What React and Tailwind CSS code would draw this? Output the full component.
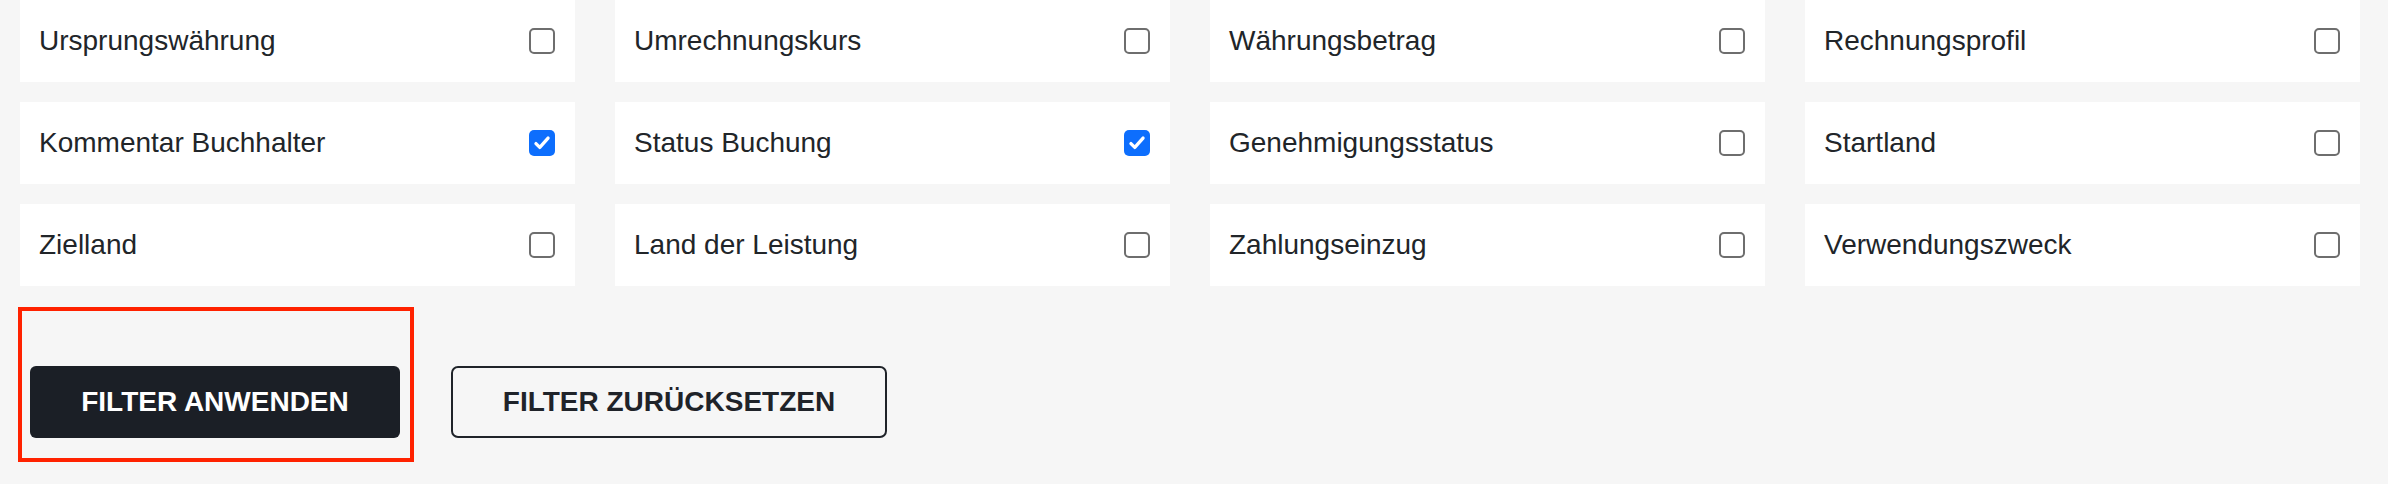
import React, { useState } from "react";

const fields = [
  { label: "Ursprungswährung", checked: false },
  { label: "Umrechnungskurs", checked: false },
  { label: "Währungsbetrag", checked: false },
  { label: "Rechnungsprofil", checked: false },
  { label: "Kommentar Buchhalter", checked: true },
  { label: "Status Buchung", checked: true },
  { label: "Genehmigungsstatus", checked: false },
  { label: "Startland", checked: false },
  { label: "Zielland", checked: false },
  { label: "Land der Leistung", checked: false },
  { label: "Zahlungseinzug", checked: false },
  { label: "Verwendungszweck", checked: false },
];

function Checkbox({ checked, onChange }) {
  if (checked) {
    return (
      <button
        type="button"
        onClick={onChange}
        className="flex h-[26px] w-[26px] items-center justify-center rounded-[5px] bg-[#0d6efd]"
      >
        <svg viewBox="0 0 20 20" className="h-[22px] w-[22px]">
          <path
            d="M4.5 10.5l3.5 3.5 7.5-8.5"
            fill="none"
            stroke="#fff"
            strokeWidth="3"
            strokeLinecap="round"
            strokeLinejoin="round"
          />
        </svg>
      </button>
    );
  }
  return (
    <button
      type="button"
      onClick={onChange}
      className="h-[26px] w-[26px] rounded-[5px] border-[2.5px] border-[#6e6e6e] bg-white"
    />
  );
}

export default function App() {
  const [items, setItems] = useState(fields);

  const toggle = (i) => {
    setItems(items.map((it, idx) => (idx === i ? { ...it, checked: !it.checked } : it)));
  };

  return (
    <div
      className="h-[484px] w-full bg-[#f6f6f6] pl-[20px] pr-[28px]"
      style={{ fontFamily: '"Liberation Sans", Arial, sans-serif' }}
    >
      <div className="grid grid-cols-4 gap-x-[40px] gap-y-[20px]">
        {items.map((item, i) => (
          <div
            key={item.label}
            className="flex h-[82px] items-center justify-between bg-white pl-[19px] pr-[20px]"
          >
            <span className="text-[28px] text-[#212529]">{item.label}</span>
            <Checkbox checked={item.checked} onChange={() => toggle(i)} />
          </div>
        ))}
      </div>

      {/* buttons */}
      <div className="relative mt-[80px] flex items-center gap-[51px] pl-[10px]">
        <div className="pointer-events-none absolute left-[-2px] top-[-59px] h-[155px] w-[396px] border-[4px] border-[#ff2200]" />
        <button
          type="button"
          className="h-[72px] w-[370px] rounded-[6px] bg-[#1b1f26] text-[28px] font-bold text-white"
        >
          FILTER ANWENDEN
        </button>
        <button
          type="button"
          className="h-[72px] w-[436px] rounded-[7px] border-[2.5px] border-[#1f2329] text-[28px] font-bold text-[#1f2329]"
        >
          FILTER ZURÜCKSETZEN
        </button>
      </div>
    </div>
  );
}
